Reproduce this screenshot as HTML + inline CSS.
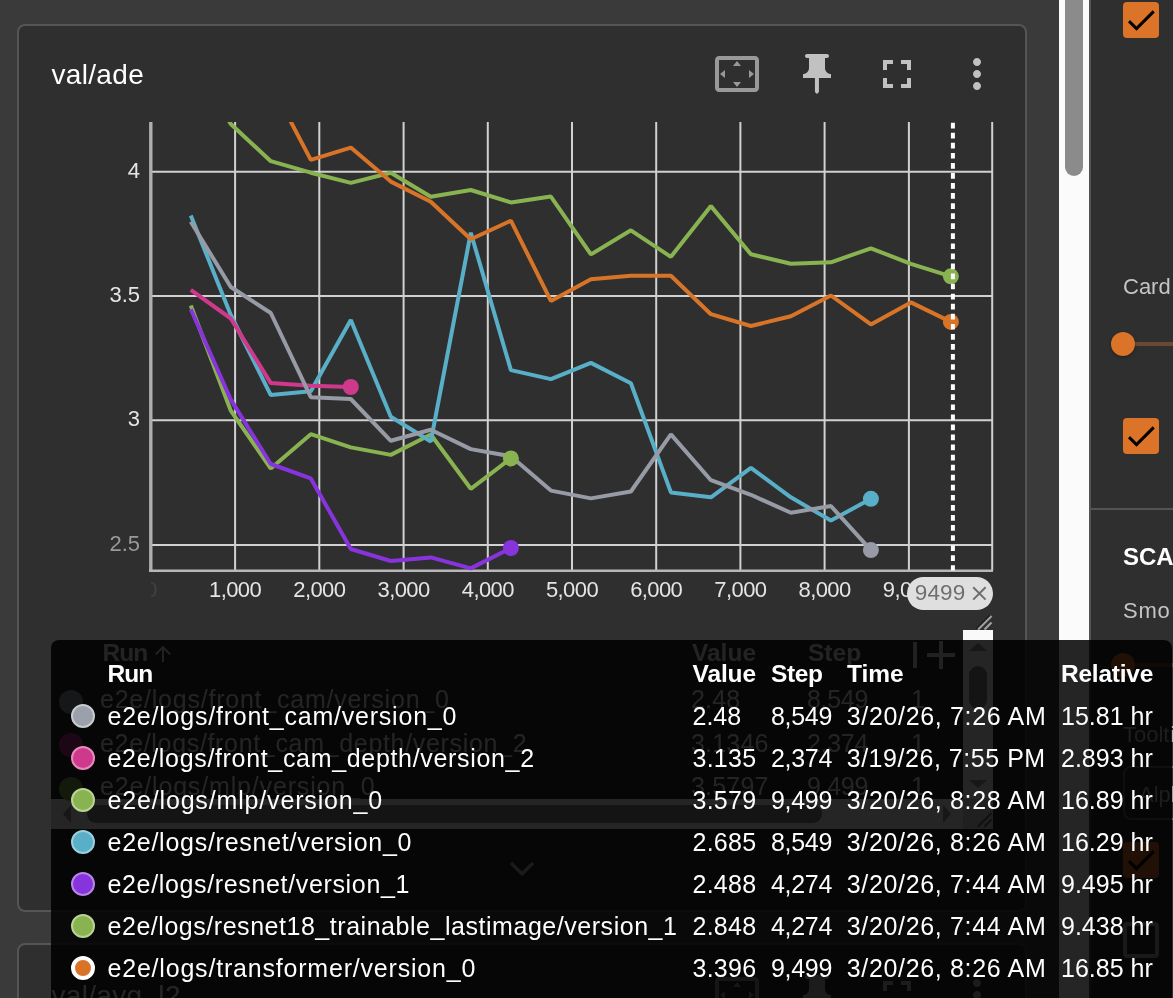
<!DOCTYPE html>
<html><head><meta charset="utf-8"><title>TensorBoard</title>
<style>
html,body{margin:0;padding:0}
body{width:1173px;height:998px;overflow:hidden;background:#3a3a3a;font-family:"Liberation Sans",sans-serif;position:relative}
.abs{position:absolute}
.card{position:absolute;box-sizing:border-box;border:2px solid #565656;border-radius:8px;background:#303030}
.title{position:absolute;left:51.5px;top:59px;font-size:28px;line-height:32px;color:#fff;letter-spacing:0.32px;white-space:nowrap}
.yl{position:absolute;left:60px;width:80px;text-align:right;font-size:22px;line-height:26px;height:26px;white-space:nowrap}
.xl{position:absolute;top:576.5px;width:80px;text-align:center;font-size:22px;letter-spacing:-0.6px;line-height:26px;color:#e6e6e6;white-space:nowrap}
.chip{position:absolute;left:907px;top:577px;width:86px;height:33px;border-radius:17px;background:#e0e0e0;color:#707070;font-size:22.5px;letter-spacing:0.15px;line-height:32px;box-sizing:border-box;padding-left:7.8px;white-space:nowrap}
.tt{position:absolute;left:51px;top:640px;width:1121px;height:380px;background:rgba(0,0,0,0.85);border-radius:8px;color:#fff;font-size:25px}
.th{position:absolute;top:19px;font-weight:bold;font-size:24.5px;line-height:30px;white-space:nowrap}
.tr{position:absolute;left:0;width:100%;height:42px}
.tr .c{position:absolute;top:6px;line-height:30px;white-space:nowrap}
.dot{position:absolute;left:20px;top:9px;width:24px;height:24px;box-sizing:border-box;border-radius:50%;border:2px solid #fff}
.dot.closest{border-width:4px}
.ur{position:absolute;left:17px;width:950px;height:44px;color:#f4f4f4;font-size:25px}
.ur .uc{position:absolute;top:8px;line-height:30px;white-space:nowrap}
.ud{position:absolute;left:42px;top:13.5px;width:24px;height:24px;border-radius:50%}
.uh{position:absolute;top:638px;font-weight:bold;font-size:24.5px;line-height:30px;color:#f0f0f0;white-space:nowrap}
.cb{position:absolute;left:1123px;width:36px;height:36px;border-radius:4px;background:#dc7429}
.side-t{position:absolute;left:1123px;font-size:22px;line-height:28px;color:#c6c6c6;white-space:nowrap}
#root{position:absolute;left:0;top:0;width:1173px;height:998px;overflow:hidden;will-change:transform;opacity:0.999}
</style></head><body><div id="root">

<!-- main card -->
<div class="card" style="left:17px;top:24px;width:1010px;height:888px"></div>
<div class="title">val/ade</div>

<!-- header icons -->
<svg class="abs" style="left:713px;top:50px" width="48" height="48" viewBox="0 0 24 24"><path fill="#9a9a9a" d="M12.01 5.5L10 8h4l-1.99-2.5zM18 10v4l2.5-1.99L18 10zM6 10l-2.5 2.01L6 14v-4zm8 6h-4l2.01 2.5L14 16zm7-13H3c-1.1 0-2 .9-2 2v14c0 1.1.9 2 2 2h18c1.1 0 2-.9 2-2V5c0-1.1-.9-2-2-2zm0 16.01H3V4.99h18v14.02z"/></svg>
<svg class="abs" style="left:793px;top:50px" width="48" height="48" viewBox="0 0 24 24"><path fill="#c2c2c2" d="M16,9V4l1,0c0.55,0,1-0.45,1-1v0c0-0.55-0.45-1-1-1H7C6.45,2,6,2.45,6,3v0 c0,0.55,0.45,1,1,1l1,0v5c0,1.66-1.34,3-3,3h0v2h5.97v7l1,1l1-1v-7H19v-2h0C17.34,12,16,10.66,16,9z"/></svg>
<svg class="abs" style="left:873px;top:50px" width="48" height="48" viewBox="0 0 24 24"><path fill="#c2c2c2" d="M7 14H5v5h5v-2H7v-3zm-2-4h2V7h3V5H5v5zm12 7h-3v2h5v-5h-2v3zM14 5v2h3v3h2V5h-5z"/></svg>
<svg class="abs" style="left:953px;top:50px" width="48" height="48" viewBox="0 0 24 24"><path fill="#c2c2c2" d="M12 8c1.1 0 2-.9 2-2s-.9-2-2-2-2 .9-2 2 .9 2 2 2zm0 2c-1.1 0-2 .9-2 2s.9 2 2 2 2-.9 2-2-.9-2-2-2zm0 6c-1.1 0-2 .9-2 2s.9 2 2 2 2-.9 2-2-.9-2-2-2z"/></svg>

<!-- chart -->
<svg id="chart" width="1173" height="640" viewBox="0 0 1173 640" style="position:absolute;left:0;top:0">
<defs><clipPath id="cp"><rect x="150" y="122" width="843" height="449"/></clipPath></defs>
<line x1="235.1" y1="122" x2="235.1" y2="571" stroke="#d2d2d2" stroke-width="2"/>
<line x1="319.3" y1="122" x2="319.3" y2="571" stroke="#d2d2d2" stroke-width="2"/>
<line x1="403.6" y1="122" x2="403.6" y2="571" stroke="#d2d2d2" stroke-width="2"/>
<line x1="487.8" y1="122" x2="487.8" y2="571" stroke="#d2d2d2" stroke-width="2"/>
<line x1="572.0" y1="122" x2="572.0" y2="571" stroke="#d2d2d2" stroke-width="2"/>
<line x1="656.2" y1="122" x2="656.2" y2="571" stroke="#d2d2d2" stroke-width="2"/>
<line x1="740.4" y1="122" x2="740.4" y2="571" stroke="#d2d2d2" stroke-width="2"/>
<line x1="824.6" y1="122" x2="824.6" y2="571" stroke="#d2d2d2" stroke-width="2"/>
<line x1="908.9" y1="122" x2="908.9" y2="571" stroke="#d2d2d2" stroke-width="2"/>
<line x1="151" y1="171.7" x2="993" y2="171.7" stroke="#d2d2d2" stroke-width="2"/>
<line x1="151" y1="295.9" x2="993" y2="295.9" stroke="#d2d2d2" stroke-width="2"/>
<line x1="151" y1="420.2" x2="993" y2="420.2" stroke="#d2d2d2" stroke-width="2"/>
<line x1="151" y1="545.0" x2="993" y2="545.0" stroke="#d2d2d2" stroke-width="2"/>
<line x1="992.2" y1="122" x2="992.2" y2="571" stroke="#d2d2d2" stroke-width="2"/>
<line x1="150.8" y1="122" x2="150.8" y2="572" stroke="#b0b0b0" stroke-width="3.4"/>
<line x1="149.1" y1="570.8" x2="993" y2="570.8" stroke="#b8b8b8" stroke-width="2.4"/>
<g clip-path="url(#cp)">
<polyline points="190.8,305.5 230.8,410.7 270.8,468.5 310.8,434.2 350.8,447.4 390.8,454.9 430.8,434.5 470.8,488.8 510.9,458.4" fill="none" stroke="#8ab452" stroke-width="4" stroke-linejoin="bevel" stroke-linecap="butt"/>
<polyline points="190.8,309.2 230.8,399.6 270.8,464.0 310.8,478.4 350.8,549.0 390.8,561.0 430.8,557.4 470.8,568.4 510.9,548.0" fill="none" stroke="#8835dd" stroke-width="4" stroke-linejoin="bevel" stroke-linecap="butt"/>
<polyline points="190.8,215.4 230.8,315.0 270.8,395.1 310.8,391.2 350.8,320.0 390.8,416.8 430.8,441.5 470.8,232.7 510.9,370.1 550.9,379.1 590.9,362.9 630.9,383.3 670.9,492.4 710.9,497.3 750.9,467.8 790.9,497.3 830.9,520.6 870.9,498.8" fill="none" stroke="#5ab0c8" stroke-width="4" stroke-linejoin="bevel" stroke-linecap="butt"/>
<polyline points="190.8,60.0 230.8,124.0 270.8,161.2 310.8,172.7 350.8,182.9 390.8,172.7 430.8,196.8 470.8,190.0 510.9,202.4 550.9,196.6 590.9,254.4 630.9,230.3 670.9,256.8 710.9,206.1 750.9,254.2 790.9,263.8 830.9,262.3 870.9,248.3 910.9,263.8 950.9,276.3" fill="none" stroke="#8ab452" stroke-width="4" stroke-linejoin="bevel" stroke-linecap="butt"/>
<polyline points="190.8,289.9 230.8,318.5 270.8,383.1 310.8,385.8 350.8,387.0" fill="none" stroke="#d03a8c" stroke-width="4" stroke-linejoin="bevel" stroke-linecap="butt"/>
<polyline points="190.8,221.8 230.8,287.0 270.8,313.0 310.8,397.2 350.8,399.0 390.8,440.8 430.8,429.8 470.8,449.1 510.9,456.3 550.9,490.6 590.9,498.4 630.9,491.5 670.9,434.4 710.9,480.2 750.9,494.8 790.9,512.8 830.9,506.0 870.9,550.1" fill="none" stroke="#979ca6" stroke-width="4" stroke-linejoin="bevel" stroke-linecap="butt"/>
<polyline points="190.8,0.0 230.8,40.0 270.8,83.5 310.8,159.9 350.8,147.6 390.8,181.6 430.8,201.8 470.8,239.3 510.9,220.7 550.9,300.9 590.9,279.3 630.9,275.7 670.9,275.7 710.9,314.2 750.9,326.0 790.9,316.3 830.9,295.5 870.9,324.4 910.9,302.4 950.9,321.9" fill="none" stroke="#d97528" stroke-width="4" stroke-linejoin="bevel" stroke-linecap="butt"/>
</g>
<circle cx="870.9" cy="550.1" r="8" fill="#979ca6"/>
<circle cx="350.8" cy="387.0" r="8" fill="#d03a8c"/>
<circle cx="870.9" cy="498.8" r="8" fill="#5ab0c8"/>
<circle cx="510.9" cy="548.0" r="8" fill="#8835dd"/>
<circle cx="510.9" cy="458.4" r="8" fill="#8ab452"/>
<circle cx="950.9" cy="276.3" r="8" fill="#8ab452"/>
<circle cx="950.9" cy="321.9" r="8" fill="#d97528"/>
<line x1="952.9" y1="122.7" x2="952.9" y2="570.5" stroke="#ffffff" stroke-width="4" stroke-dasharray="5.7 4.36"/>
</svg>
<div class="yl" style="top:157.9px;color:#e6e6e6">4</div>
<div class="yl" style="top:282.1px;color:#e6e6e6">3.5</div>
<div class="yl" style="top:406.4px;color:#e6e6e6">3</div>
<div class="yl" style="top:531.2px;color:#9a9a9a">2.5</div>
<div class="xl" style="left:195.1px">1,000</div>
<div class="xl" style="left:279.3px">2,000</div>
<div class="xl" style="left:363.6px">3,000</div>
<div class="xl" style="left:447.8px">4,000</div>
<div class="xl" style="left:532.0px">5,000</div>
<div class="xl" style="left:616.2px">6,000</div>
<div class="xl" style="left:700.4px">7,000</div>
<div class="xl" style="left:784.6px">8,000</div>
<div class="xl" style="left:868.9px">9,000</div>
<div class="abs" style="left:151px;top:576.5px;width:12px;height:26px;overflow:hidden"><div class="xl" style="left:-40px;top:0;color:#424242">0</div></div>

<!-- step chip -->
<div class="chip">9499</div>
<svg class="abs" style="left:972px;top:586px" width="15" height="15" viewBox="0 0 15 15"><path d="M1.2 1.2L13.6 13.6M13.6 1.2L1.2 13.6" stroke="#707070" stroke-width="2" fill="none"/></svg>

<!-- resize grip of table -->
<svg class="abs" style="left:975px;top:615px" width="18" height="16" viewBox="0 0 18 16"><path d="M3 14.5L16.5 1M9.5 14.5L16.5 7.5" stroke="#a0a0a0" stroke-width="2.3" fill="none"/><path d="M1.2 13.8L14.8 0.2" stroke="#1e1e1e" stroke-width="1.4" fill="none"/></svg>

<!-- underlying data table (mostly hidden under tooltip) -->
<div class="abs" style="left:963px;top:630px;width:30px;height:169px;background:#fafafa"></div>
<div class="abs" style="left:969px;top:666px;width:18px;height:43px;border-radius:9px;background:#8c8c8c"></div>
<svg class="abs" style="left:963px;top:640px" width="30" height="14" viewBox="0 0 30 14"><path d="M15 3L24 11H6z" fill="#a0a0a0"/></svg>
<svg class="abs" style="left:963px;top:777px" width="30" height="14" viewBox="0 0 30 14"><path d="M15 11L24 3H6z" fill="#a0a0a0"/></svg>
<div class="abs" style="left:51px;top:799px;width:912px;height:30px;background:#fafafa"></div>
<div class="abs" style="left:87px;top:805px;width:735px;height:18px;border-radius:9px;background:#8c8c8c"></div>
<svg class="abs" style="left:60px;top:799px" width="14" height="30" viewBox="0 0 14 30"><path d="M3 15L11 6V24z" fill="#a0a0a0"/></svg>
<svg class="abs" style="left:940px;top:799px" width="14" height="30" viewBox="0 0 14 30"><path d="M11 15L3 6V24z" fill="#a0a0a0"/></svg>
<div class="abs" style="left:963px;top:799px;width:30px;height:30px;background:#dcdcdc"></div>
<svg class="abs" style="left:975px;top:812px" width="18" height="16" viewBox="0 0 18 16"><path d="M3 14.5L16.5 1M9.5 14.5L16.5 7.5" stroke="#6a6a6a" stroke-width="2" fill="none"/></svg>
<div class="uh" style="left:102.5px;letter-spacing:-0.9px;font-size:24.5px">Run</div>
<svg class="abs" style="left:154px;top:644px" width="18" height="20" viewBox="0 0 18 20"><path d="M8.9 2.8V18M1.8 10.4L8.9 3.2L16.2 10.4" stroke="#f0f0f0" stroke-width="1.9" fill="none"/></svg>
<div class="uh" style="left:692px">Value</div>
<div class="uh" style="left:808px">Step</div>
<div class="abs" style="left:912.5px;top:642px;width:4px;height:26px;background:#e0e0e0"></div>
<svg class="abs" style="left:926px;top:640px" width="30" height="30" viewBox="0 0 30 30"><path d="M15 1V29M1 15H29" stroke="#e0e0e0" stroke-width="4" fill="none"/></svg>
<div class="ur" style="top:676.0px"><span class="ud" style="background:#9ca1ab"></span><span class="uc" style="left:83px;letter-spacing:0.775px">e2e/logs/front_cam/version_0</span><span class="uc" style="left:674px;letter-spacing:0.2px">2.48</span><span class="uc" style="left:790px;letter-spacing:-0.3px">8,549</span><span class="uc" style="left:894px">1</span></div>
<div class="ur" style="top:719.7px"><span class="ud" style="background:#d03a8c"></span><span class="uc" style="left:83px;letter-spacing:0.67px">e2e/logs/front_cam_depth/version_2</span><span class="uc" style="left:674px;letter-spacing:0.2px">3.1346</span><span class="uc" style="left:790px;letter-spacing:-0.3px">2,374</span><span class="uc" style="left:894px">1</span></div>
<div class="ur" style="top:763.4px"><span class="ud" style="background:#8ab452"></span><span class="uc" style="left:83px;letter-spacing:0.836px">e2e/logs/mlp/version_0</span><span class="uc" style="left:674px;letter-spacing:0.2px">3.5797</span><span class="uc" style="left:790px;letter-spacing:-0.3px">9,499</span><span class="uc" style="left:894px">1</span></div>
<svg class="abs" style="left:508px;top:858px" width="28" height="22" viewBox="0 0 28 22"><path d="M3 5L14 16L25 5" stroke="#bdbdbd" stroke-width="3.2" fill="none"/></svg>

<!-- next card -->
<div class="card" style="left:17px;top:943.3px;width:1010px;height:400px"></div>
<div class="title" style="top:980px">val/avg_l2</div>
<svg class="abs" style="left:713px;top:971px" width="48" height="48" viewBox="0 0 24 24"><path fill="#9a9a9a" d="M12.01 5.5L10 8h4l-1.99-2.5zM18 10v4l2.5-1.99L18 10zM6 10l-2.5 2.01L6 14v-4zm8 6h-4l2.01 2.5L14 16zm7-13H3c-1.1 0-2 .9-2 2v14c0 1.1.9 2 2 2h18c1.1 0 2-.9 2-2V5c0-1.1-.9-2-2-2zm0 16.01H3V4.99h18v14.02z"/></svg>
<svg class="abs" style="left:793px;top:971px" width="48" height="48" viewBox="0 0 24 24"><path fill="#c2c2c2" d="M16,9V4l1,0c0.55,0,1-0.45,1-1v0c0-0.55-0.45-1-1-1H7C6.45,2,6,2.45,6,3v0 c0,0.55,0.45,1,1,1l1,0v5c0,1.66-1.34,3-3,3h0v2h5.97v7l1,1l1-1v-7H19v-2h0C17.34,12,16,10.66,16,9z"/></svg>
<svg class="abs" style="left:873px;top:971px" width="48" height="48" viewBox="0 0 24 24"><path fill="#c2c2c2" d="M7 14H5v5h5v-2H7v-3zm-2-4h2V7h3V5H5v5zm12 7h-3v2h5v-5h-2v3zM14 5v2h3v3h2V5h-5z"/></svg>
<svg class="abs" style="left:953px;top:971px" width="48" height="48" viewBox="0 0 24 24"><path fill="#c2c2c2" d="M12 8c1.1 0 2-.9 2-2s-.9-2-2-2-2 .9-2 2 .9 2 2 2zm0 2c-1.1 0-2 .9-2 2s.9 2 2 2 2-.9 2-2-.9-2-2-2zm0 6c-1.1 0-2 .9-2 2s.9 2 2 2 2-.9 2-2-.9-2-2-2z"/></svg>

<!-- page scrollbar -->
<div class="abs" style="left:1059px;top:0;width:30px;height:998px;background:#fcfcfc"></div>
<div class="abs" style="left:1065px;top:-20px;width:18px;height:196px;border-radius:9px;background:#8c8c8c"></div>

<!-- side panel -->
<div class="abs" style="left:1089px;top:0;width:84px;height:998px;background:#303030;border-left:2px solid #545454;box-sizing:border-box"></div>
<div class="cb" style="top:2px"><svg width="36" height="36" viewBox="0 0 36 36"><path d="M6 19.1L13.5 26.6L30.7 9.4" stroke="#000" stroke-width="3" fill="none"/></svg></div>
<div class="side-t" style="top:273px">Card</div>
<div class="abs" style="left:1123px;top:342px;width:60px;height:4px;background:#6a4a34"></div>
<div class="abs" style="left:1111px;top:332px;width:24px;height:24px;border-radius:50%;background:#dc7429;box-shadow:0 1px 3px rgba(0,0,0,.4)"></div>
<div class="cb" style="top:418px"><svg width="36" height="36" viewBox="0 0 36 36"><path d="M6 19.1L13.5 26.6L30.7 9.4" stroke="#000" stroke-width="3" fill="none"/></svg></div>
<div class="abs" style="left:1091px;top:508px;width:82px;height:2px;background:#555"></div>
<div class="abs" style="left:1123px;top:541.7px;font-size:24px;line-height:30px;font-weight:bold;color:#fff;white-space:nowrap">SCALARS</div>
<div class="side-t" style="top:597px;letter-spacing:0.8px">Smo</div>
<div class="abs" style="left:1123px;top:663px;width:60px;height:4px;background:#6a4a34"></div>
<div class="abs" style="left:1111px;top:653px;width:24px;height:24px;border-radius:50%;background:#dc7429"></div>
<div class="side-t" style="top:721px">Tooltip sorting</div>
<div class="abs" style="left:1123px;top:766px;width:80px;height:54px;box-sizing:border-box;border:2px solid #6a6a6a;border-radius:8px"></div>
<div class="side-t" style="top:781px;left:1139px">Alphabetical</div>
<div class="cb" style="top:842px"><svg width="36" height="36" viewBox="0 0 36 36"><path d="M6 19.1L13.5 26.6L30.7 9.4" stroke="#000" stroke-width="3" fill="none"/></svg></div>
<div class="abs" style="left:1123px;top:922px;width:36px;height:36px;box-sizing:border-box;border:4px solid #b0b0b0;border-radius:4px"></div>

<!-- tooltip -->
<div class="tt">
<div class="th" style="left:56.5px;letter-spacing:-0.9px">Run</div><div class="th" style="left:641.5px;letter-spacing:-0.1px">Value</div><div class="th" style="left:720px;letter-spacing:-0.37px">Step</div><div class="th" style="left:796px">Time</div><div class="th" style="left:1010px;letter-spacing:-0.24px">Relative</div>
<div class="tr" style="top:54.5px"><span class="dot" style="background:#9ca1ab;border-color:#c8cbd0"></span><span class="c" style="left:56.5px;letter-spacing:0.775px">e2e/logs/front_cam/version_0</span><span class="c" style="left:641.5px;letter-spacing:0px">2.48</span><span class="c" style="left:720px;letter-spacing:-0.3px">8,549</span><span class="c" style="left:795.7px;letter-spacing:0.67px">3/20/26, 7:26 AM</span><span class="c" style="left:1010px">15.81 hr</span></div>
<div class="tr" style="top:96.6px"><span class="dot" style="background:#d03a8c;border-color:#e98abf"></span><span class="c" style="left:56.5px;letter-spacing:0.67px">e2e/logs/front_cam_depth/version_2</span><span class="c" style="left:641.5px;letter-spacing:0.26px">3.135</span><span class="c" style="left:720px;letter-spacing:-0.3px">2,374</span><span class="c" style="left:795.7px;letter-spacing:0.54px">3/19/26, 7:55 PM</span><span class="c" style="left:1010px">2.893 hr</span></div>
<div class="tr" style="top:138.7px"><span class="dot" style="background:#8ab452;border-color:#b9d495"></span><span class="c" style="left:56.5px;letter-spacing:0.836px">e2e/logs/mlp/version_0</span><span class="c" style="left:641.5px;letter-spacing:0.26px">3.579</span><span class="c" style="left:720px;letter-spacing:-0.3px">9,499</span><span class="c" style="left:795.7px;letter-spacing:0.67px">3/20/26, 8:28 AM</span><span class="c" style="left:1010px">16.89 hr</span></div>
<div class="tr" style="top:180.8px"><span class="dot" style="background:#5ab0c8;border-color:#9dd0de"></span><span class="c" style="left:56.5px;letter-spacing:0.736px">e2e/logs/resnet/version_0</span><span class="c" style="left:641.5px;letter-spacing:0.26px">2.685</span><span class="c" style="left:720px;letter-spacing:-0.3px">8,549</span><span class="c" style="left:795.7px;letter-spacing:0.67px">3/20/26, 8:26 AM</span><span class="c" style="left:1010px">16.29 hr</span></div>
<div class="tr" style="top:222.9px"><span class="dot" style="background:#8835dd;border-color:#b986eb"></span><span class="c" style="left:56.5px;letter-spacing:0.65px">e2e/logs/resnet/version_1</span><span class="c" style="left:641.5px;letter-spacing:0.26px">2.488</span><span class="c" style="left:720px;letter-spacing:-0.3px">4,274</span><span class="c" style="left:795.7px;letter-spacing:0.67px">3/20/26, 7:44 AM</span><span class="c" style="left:1010px">9.495 hr</span></div>
<div class="tr" style="top:265.0px"><span class="dot" style="background:#8ab452;border-color:#b9d495"></span><span class="c" style="left:56.5px;letter-spacing:0.536px">e2e/logs/resnet18_trainable_lastimage/version_1</span><span class="c" style="left:641.5px;letter-spacing:0.26px">2.848</span><span class="c" style="left:720px;letter-spacing:-0.3px">4,274</span><span class="c" style="left:795.7px;letter-spacing:0.67px">3/20/26, 7:44 AM</span><span class="c" style="left:1010px">9.438 hr</span></div>
<div class="tr" style="top:307.1px"><span class="dot closest" style="background:#d97528;border-color:#ffffff"></span><span class="c" style="left:56.5px;letter-spacing:0.8px">e2e/logs/transformer/version_0</span><span class="c" style="left:641.5px;letter-spacing:0.26px">3.396</span><span class="c" style="left:720px;letter-spacing:-0.3px">9,499</span><span class="c" style="left:795.7px;letter-spacing:0.67px">3/20/26, 8:26 AM</span><span class="c" style="left:1010px">16.85 hr</span></div>
</div>
</div></body></html>
